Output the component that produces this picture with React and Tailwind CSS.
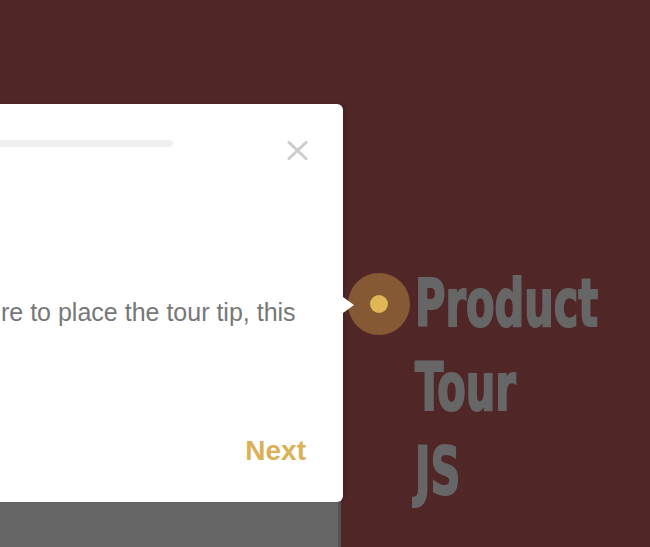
import React from "react";

export default function App() {
  return (
    <div className="relative w-[650px] h-[547px] overflow-hidden bg-[#512627]">
      <div className="pl-[415px] pt-[262px]">
        <h1
          className="origin-left scale-x-[0.71] text-[65px] leading-[84px] font-bold text-[#666666] whitespace-nowrap [-webkit-text-stroke:2px_#666666]"
          style={{ fontFamily: '"DejaVu Sans Condensed", "DejaVu Sans", sans-serif' }}
        >
          Product
          <br />
          Tour
          <br />
          JS
        </h1>
      </div>

      {/* highlighted page block behind the tip */}
      <div className="absolute left-0 top-[480px] w-[341px] h-[80px] bg-[#666666] border-r-[3px] border-[#535353]" />

      {/* beacon */}
      <div className="absolute left-[348px] top-[273px] w-[62px] h-[62px] rounded-full bg-[#845934] flex items-center justify-center">
        <div className="w-[18px] h-[18px] rounded-full bg-[#dfb757]" />
      </div>

      {/* tour tip card */}
      <div
        className="absolute left-[-300px] top-[104px] w-[643px] h-[398px] rounded-[6px] bg-white shadow-[2px_0_3px_rgba(0,0,0,0.15)] flex flex-col"
        style={{ fontFamily: '"Liberation Sans", Arial, sans-serif' }}
      >
        <div className="flex items-start pt-[36px] h-[60px]">
          <div className="flex-1 h-[7px] rounded-full bg-[#f0f0f0] ml-[40px]" />
          <button className="ml-[113px] mr-[34px] w-[23px] h-[21px]" aria-label="Close">
            <svg width="23" height="21" viewBox="0 0 23 21">
              <path d="M2 1.5 L21 19.5 M21 1.5 L2 19.5" stroke="#cccccc" strokeWidth="3" fill="none" />
            </svg>
          </button>
        </div>
        <p className="mt-[130px] pl-[301px] whitespace-nowrap text-[25px] leading-[36px] text-[#777777]">
          re to place the tour tip, this
        </p>
        <div className="mt-[105px] flex justify-end pr-[37px]">
          <button className="text-[28px] leading-[32px] font-bold text-[#dcb055]">Next</button>
        </div>
        {/* arrow */}
        <div className="absolute left-full top-[193px] w-0 h-0 border-y-[8px] border-y-transparent border-l-[11px] border-l-white" />
      </div>
    </div>
  );
}
